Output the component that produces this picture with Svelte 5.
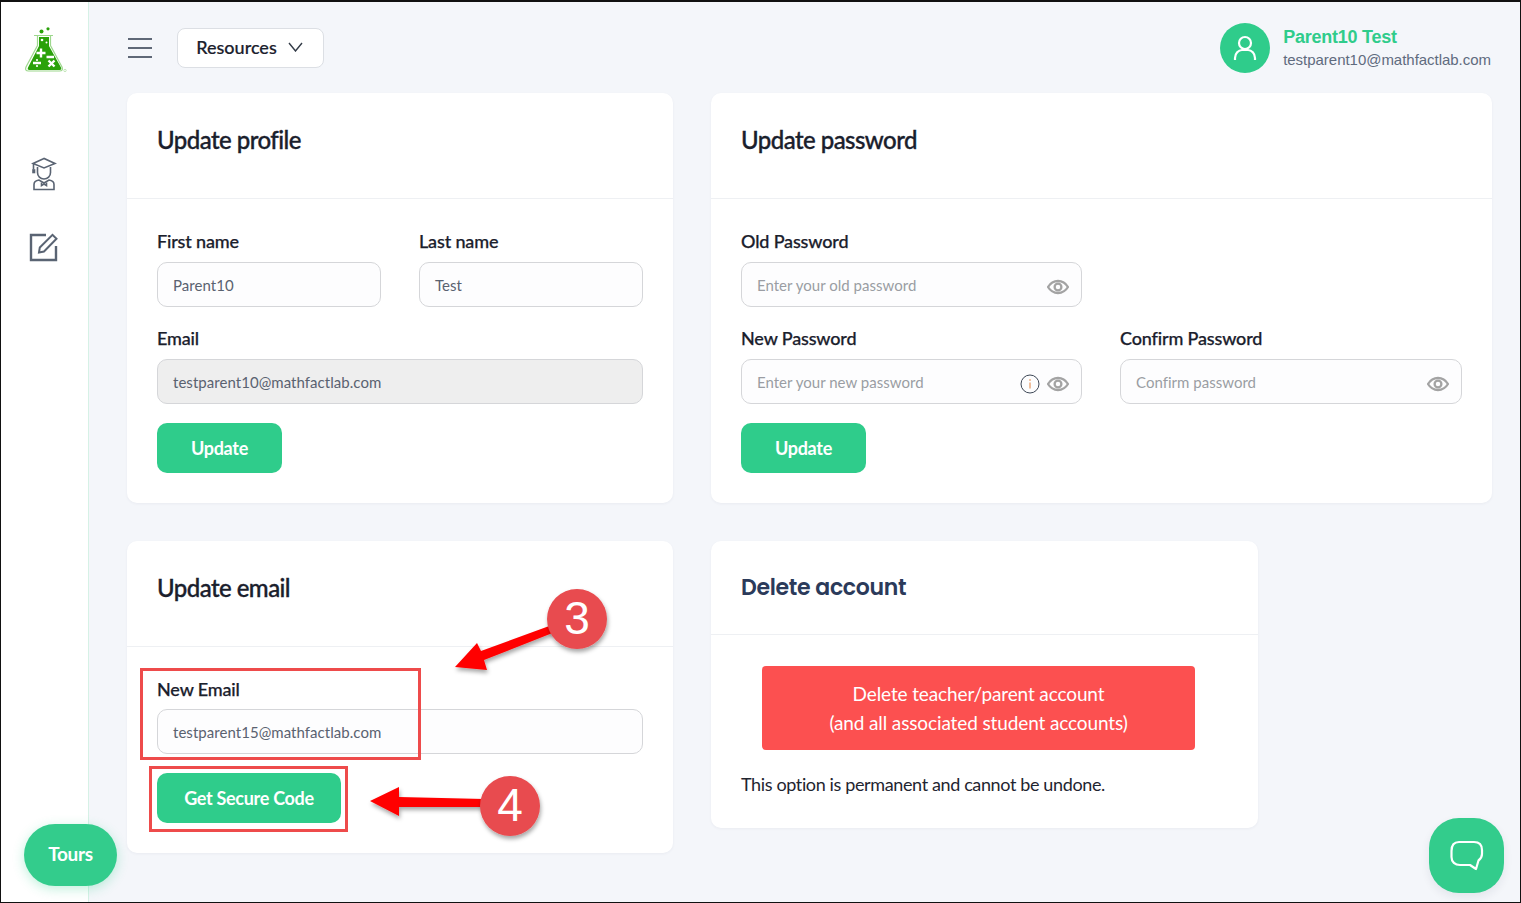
<script lang="ts">
  const eye = 'M1 8c2.6-4.2 6.2-6 10-6s7.400 1.800 10 6c-2.600 4.200-6.200 6-10 6S3.600 12.200 1 8z';
</script>

{#snippet eyeIcon()}
  <svg class="eye" width="22" height="16" viewBox="0 0 22 16" fill="none" stroke="#a3a3a3" stroke-width="2.300">
    <path d={eye} />
    <circle cx="11" cy="8" r="3.400" />
  </svg>
{/snippet}

<div class="page">
  <aside class="sidebar">
    <svg class="logo" width="42" height="46" viewBox="0 0 42 46">
      <circle cx="16.500" cy="4.500" r="2" fill="#2aa10a" />
      <circle cx="23" cy="1.800" r="1.600" fill="#2aa10a" />
      <path d="M9 8.500h19M12.500 9v9.500L1 40q-1.500 4 2.500 4h31q4 0 2.500-4L25.500 18.500V9" fill="none" stroke="#9ed88e" stroke-width="1.200" />
      <path d="M14 10h10v9l12 21.500q1 2.500-1.500 2.500h-30q-2.500 0-1.500-2.500L14 19z" fill="#2aa10a" />
      <path d="M16 21.500v9M11.500 26h9M21.500 30h7.500" stroke="#fff" stroke-width="2.400" fill="none" />
      <path d="M8 36h8M23.500 33.500l6 6M29.500 33.500l-6 6" stroke="#fff" stroke-width="2.400" fill="none" />
      <circle cx="12" cy="33" r="1.100" fill="#fff" /><circle cx="12" cy="39" r="1.100" fill="#fff" />
      <circle cx="17" cy="13" r="1.300" fill="#fff" /><circle cx="21.500" cy="15.500" r="1" fill="#fff" />
      <circle cx="40" cy="43.500" r="1.200" fill="none" stroke="#9ed88e" stroke-width=".6" />
    </svg>
    <svg class="nav-student" width="26" height="34" viewBox="0 0 26 34" fill="none" stroke="#5a6473" stroke-width="1.600">
      <path d="M13 1.500L2 6.500l11 4.500 11-4.500z" />
      <path d="M2.500 7v5.500" />
      <path d="M2 13h1.500v2.500H2z" fill="#5a6473" />
      <path d="M6.500 10v5.500c0 3.800 2.800 6.500 6.500 6.500s6.500-2.700 6.500-6.500V10" />
      <path d="M3 32.500v-5c0-2.500 2-4 5-4.500l5 3 5-3c3 .5 5 2 5 4.500v5z" />
      <path d="M10.500 25.500v3l2.500-1.500 2.500 1.500v-3" />
    </svg>
    <svg class="nav-edit" width="30" height="30" viewBox="0 0 30 30" fill="none" stroke="#5a6473" stroke-width="2.400">
      <path d="M17 3H2v25h25V14" />
      <path d="M10 20.500l.8-5L23.500 2.800l4 4L15 19.500z" stroke-width="2" />
    </svg>
  </aside>

  <main class="main">
    <header class="topbar">
      <svg class="burger" width="24" height="22" viewBox="0 0 24 22" fill="none" stroke="#5f6877" stroke-width="2.200">
        <path d="M0 2h24M0 11h24M0 20h24" />
      </svg>
      <button class="resources">
        Resources
        <svg width="15" height="10" viewBox="0 0 15 10" fill="none" stroke="#333b47" stroke-width="1.400"><path d="M1 1l6.500 8L14 1" /></svg>
      </button>
      <div class="user">
        <div class="avatar">
          <svg width="24" height="26" viewBox="0 0 24 26" fill="none" stroke="#fff" stroke-width="2.200">
            <circle cx="12" cy="8" r="6" />
            <path d="M2 25v-2c0-4.500 3.500-8 7-8h6c3.500 0 7 3.500 7 8v2" />
          </svg>
        </div>
        <div class="user-text">
          <div class="user-name">Parent10 Test</div>
          <div class="user-mail">testparent10@mathfactlab.com</div>
        </div>
      </div>
    </header>

    <div class="row row-top">
      <section class="card profile">
        <h2 class="card-head">Update profile</h2>
        <div class="card-body">
          <div class="pair">
            <label class="field"><span>First name</span><div class="input">Parent10</div></label>
            <label class="field"><span>Last name</span><div class="input">Test</div></label>
          </div>
          <label class="field"><span>Email</span><div class="input disabled">testparent10@mathfactlab.com</div></label>
          <button class="btn">Update</button>
        </div>
      </section>

      <section class="card password">
        <h2 class="card-head">Update password</h2>
        <div class="card-body">
          <div class="pair">
            <label class="field"><span>Old Password</span>
              <div class="input ph">Enter your old password {@render eyeIcon()}</div>
            </label>
            <div class="field"></div>
          </div>
          <div class="pair">
            <label class="field"><span>New Password</span>
              <div class="input ph">Enter your new password
                <svg class="info" width="20" height="20" viewBox="0 0 20 20" fill="none">
                  <circle cx="10" cy="10" r="9" stroke="#3d4756" stroke-width="1" />
                  <path d="M10 8.500v6" stroke="#e0803c" stroke-width="1" />
                  <circle cx="10" cy="6" r=".8" fill="#e0803c" />
                </svg>
                {@render eyeIcon()}
              </div>
            </label>
            <label class="field"><span>Confirm Password</span>
              <div class="input ph">Confirm password {@render eyeIcon()}</div>
            </label>
          </div>
          <button class="btn">Update</button>
        </div>
      </section>
    </div>

    <div class="row">
      <section class="card profile email">
        <h2 class="card-head">Update email</h2>
        <div class="card-body">
          <label class="field"><span>New Email</span><div class="input">testparent15@mathfactlab.com</div></label>
          <button class="btn wide">Get Secure Code</button>
        </div>
      </section>

      <section class="card danger">
        <h2 class="card-head">Delete account</h2>
        <div class="danger-body">
          <button class="delete">Delete teacher/parent account<br />(and all associated student accounts)</button>
          <p>This option is permanent and cannot be undone.</p>
        </div>
      </section>
    </div>
  </main>

  <button class="tours">Tours</button>
  <button class="chat" aria-label="Chat">
    <svg width="34" height="32" viewBox="0 0 34 32" fill="none" stroke="#fff" stroke-width="2.200" stroke-linejoin="round">
      <path d="M9 2h15c5 0 8 3 8 8v4c0 3-1.500 5-3.500 6.500L26 29l-6-4H10c-5 0-8.500-3-8.500-8v-6C1.500 5 4 2 9 2z" />
    </svg>
  </button>

  <!-- screenshot annotations -->
  <div class="mark mark-email"></div>
  <div class="mark mark-code"></div>
  <svg class="arrows" width="1521" height="903" viewBox="0 0 1521 903">
    <defs>
      <filter id="soft" x="-20%" y="-20%" width="140%" height="150%">
        <feDropShadow dx="1" dy="3" stdDeviation="2" flood-color="#000" flood-opacity=".35" />
      </filter>
    </defs>
    <g filter="url(#soft)" fill="#f00">
      <path d="M455 667L477 643 481 651 552 625 555 632 484 660 487 670z" />
      <path d="M370 801L399 787 399 797 484 799 484 807 399 807 399 816z" />
    </g>
    <g filter="url(#soft)" fill="#e84b4f">
      <circle cx="577" cy="619" r="30" />
      <circle cx="510" cy="806" r="30" />
    </g>
    <text x="577" y="634" class="num">3</text>
    <text x="510" y="821" class="num">4</text>
  </svg>
</div>

<style>
  :global(body) {
    margin: 0;
    background: #f4f6fa;
  }

  .page {
    position: relative;
    display: flex;
    box-sizing: border-box;
    width: 1521px;
    height: 903px;
    overflow: hidden;
    border: 1px solid #111;
    border-top-width: 2px;
    background: #f4f6fa;
    font-family: Lato, sans-serif;
    color: #1a202c;
  }

  .sidebar {
    display: flex;
    flex-direction: column;
    align-items: center;
    box-sizing: border-box;
    width: 88px;
    flex-shrink: 0;
    padding-top: 25px;
    padding-right: 2px;
    background: #fff;
    border-right: 1px solid #d6f1e6;
  }
  .logo { margin-left: 5px; }
  .nav-student { margin-top: 84px; }
  .nav-edit { margin-top: 41px; }

  .main {
    flex: 1;
    padding: 0 28px 0 38px;
    min-width: 0;
  }

  .topbar {
    display: flex;
    align-items: center;
    height: 91px;
  }
  .burger { margin: 0 26px 0 1px; }
  .resources {
    display: flex;
    align-items: center;
    justify-content: center;
    gap: 11px;
    width: 147px;
    height: 40px;
    margin-left: -1px;
    padding: 0 2px 2px 0;
    background: #fff;
    border: 1px solid #dcdfe4;
    border-radius: 8px;
    font: 500 18px Lato, sans-serif;
    color: #1a202c;
    -webkit-text-stroke: .2px #1a202c;
  }
  .user {
    display: flex;
    align-items: center;
    gap: 13px;
    margin-left: auto;
    margin-right: 1px;
  }
  .avatar {
    display: flex;
    align-items: center;
    justify-content: center;
    width: 50px;
    height: 50px;
    border-radius: 50%;
    background: #2fcc8b;
  }
  .user-text { font-family: "Liberation Sans", Arial, sans-serif; }
  .user-name { font-size: 18px; font-weight: 700; letter-spacing: -.25px; color: #2fcc8b; line-height: 24px; }
  .user-mail { font-size: 15px; letter-spacing: -.03px; color: #5f6b7e; line-height: 22px; }

  .row {
    display: flex;
    gap: 38px;
    margin-bottom: 38px;
  }
  .card {
    background: #fff;
    border-radius: 10px;
    box-shadow: 0 1px 3px rgba(30, 40, 70, .05);
  }
  .profile { width: 546px; height: 410px; flex-shrink: 0; }
  .email { height: 312px; }
  .password { flex: 1; }
  .danger { width: 547px; height: 287px; }

  .card-head {
    box-sizing: border-box;
    height: 106px;
    margin: 0;
    padding: 30px 30px 0;
    font-size: 24px;
    line-height: 34px;
    font-weight: 500;
    letter-spacing: -.55px;
    -webkit-text-stroke: .35px #1a202c;
    border-bottom: 1px solid #eef0f3;
  }
  .card-body {
    display: flex;
    flex-direction: column;
    padding: 30px 30px 0;
  }
  .pair {
    display: grid;
    grid-template-columns: 1fr 1fr;
    gap: 38px;
  }
  .password .pair { grid-template-columns: 341px 342px; }
  .field {
    display: block;
    margin-bottom: 19px;
  }
  .field span {
    display: block;
    height: 24px;
    margin-bottom: 9px;
    font-size: 18px;
    line-height: 24px;
    font-weight: 500;
    letter-spacing: -.15px;
    -webkit-text-stroke: .25px #1a202c;
  }
  .email .field span { margin-bottom: 8px; }
  .input {
    display: flex;
    align-items: center;
    box-sizing: border-box;
    height: 45px;
    padding: 0 15px;
    background: #fdfdfe;
    border: 1px solid #d5d6d9;
    border-radius: 10px;
    font-size: 15px;
    color: #5a6270;
    letter-spacing: .05px;
  }
  .disabled { background: #eeeeee; }
  .ph { color: #9a9da3; letter-spacing: .02px; padding-right: 16px; }
  .eye { margin: 5px -4px 0 auto; flex-shrink: 0; }
  .info { margin: 5px 7px 0 auto; flex-shrink: 0; }
  .info + .eye { margin-left: 0; }

  .btn {
    width: 125px;
    height: 50px;
    background: #2fcc8b;
    border: 0;
    border-radius: 10px;
    font: 700 18px Lato, sans-serif;
    letter-spacing: -.3px;
    color: #fff;
  }
  .wide { width: 184px; }

  .danger .card-head {
    height: 94px;
    padding-top: 30px;
    font-family: Poppins, Inter, sans-serif;
    font-size: 22px;
    font-weight: 600;
    -webkit-text-stroke: 0;
    letter-spacing: -.3px;
    color: #2b3a5a;
  }
  .danger-body { padding: 31px 30px 0; }
  .delete {
    display: block;
    width: 433px;
    height: 84px;
    margin-left: 21px;
    background: #fc5050;
    border: 0;
    border-radius: 4px;
    font: 400 19px/29px Lato, sans-serif;
    letter-spacing: -.12px;
    color: #fff;
  }
  .danger-body p {
    margin: 22px 0 0;
    font-size: 18px;
    line-height: 24px;
    letter-spacing: -.37px;
    color: #1f2530;
  }

  .tours {
    position: absolute;
    left: 23px;
    top: 822px;
    width: 93px;
    height: 62px;
    padding: 0 0 4px;
    background: #33cc8c;
    border: 0;
    border-radius: 31px;
    box-shadow: 0 3px 12px rgba(47, 204, 139, .3);
    font: 700 19px Lato, sans-serif;
    letter-spacing: -.3px;
    color: #fff;
  }
  .chat {
    position: absolute;
    left: 1428px;
    top: 816px;
    display: flex;
    align-items: center;
    justify-content: center;
    width: 75px;
    height: 75px;
    padding: 0;
    background: #33cc8c;
    border: 0;
    border-radius: 30px;
    box-shadow: 0 4px 10px rgba(30, 40, 70, .08);
  }

  .mark {
    position: absolute;
    box-sizing: border-box;
    border: 3px solid #ee4b4b;
  }
  .mark-email { left: 139px; top: 666px; width: 281px; height: 92px; }
  .mark-code { left: 148px; top: 764px; width: 199px; height: 66px; }

  .arrows {
    position: absolute;
    left: -1px;
    top: -2px;
    pointer-events: none;
  }
  .num {
    font-family: "Liberation Sans", Arial, sans-serif;
    font-size: 46px;
    fill: #fff;
    text-anchor: middle;
  }
</style>
